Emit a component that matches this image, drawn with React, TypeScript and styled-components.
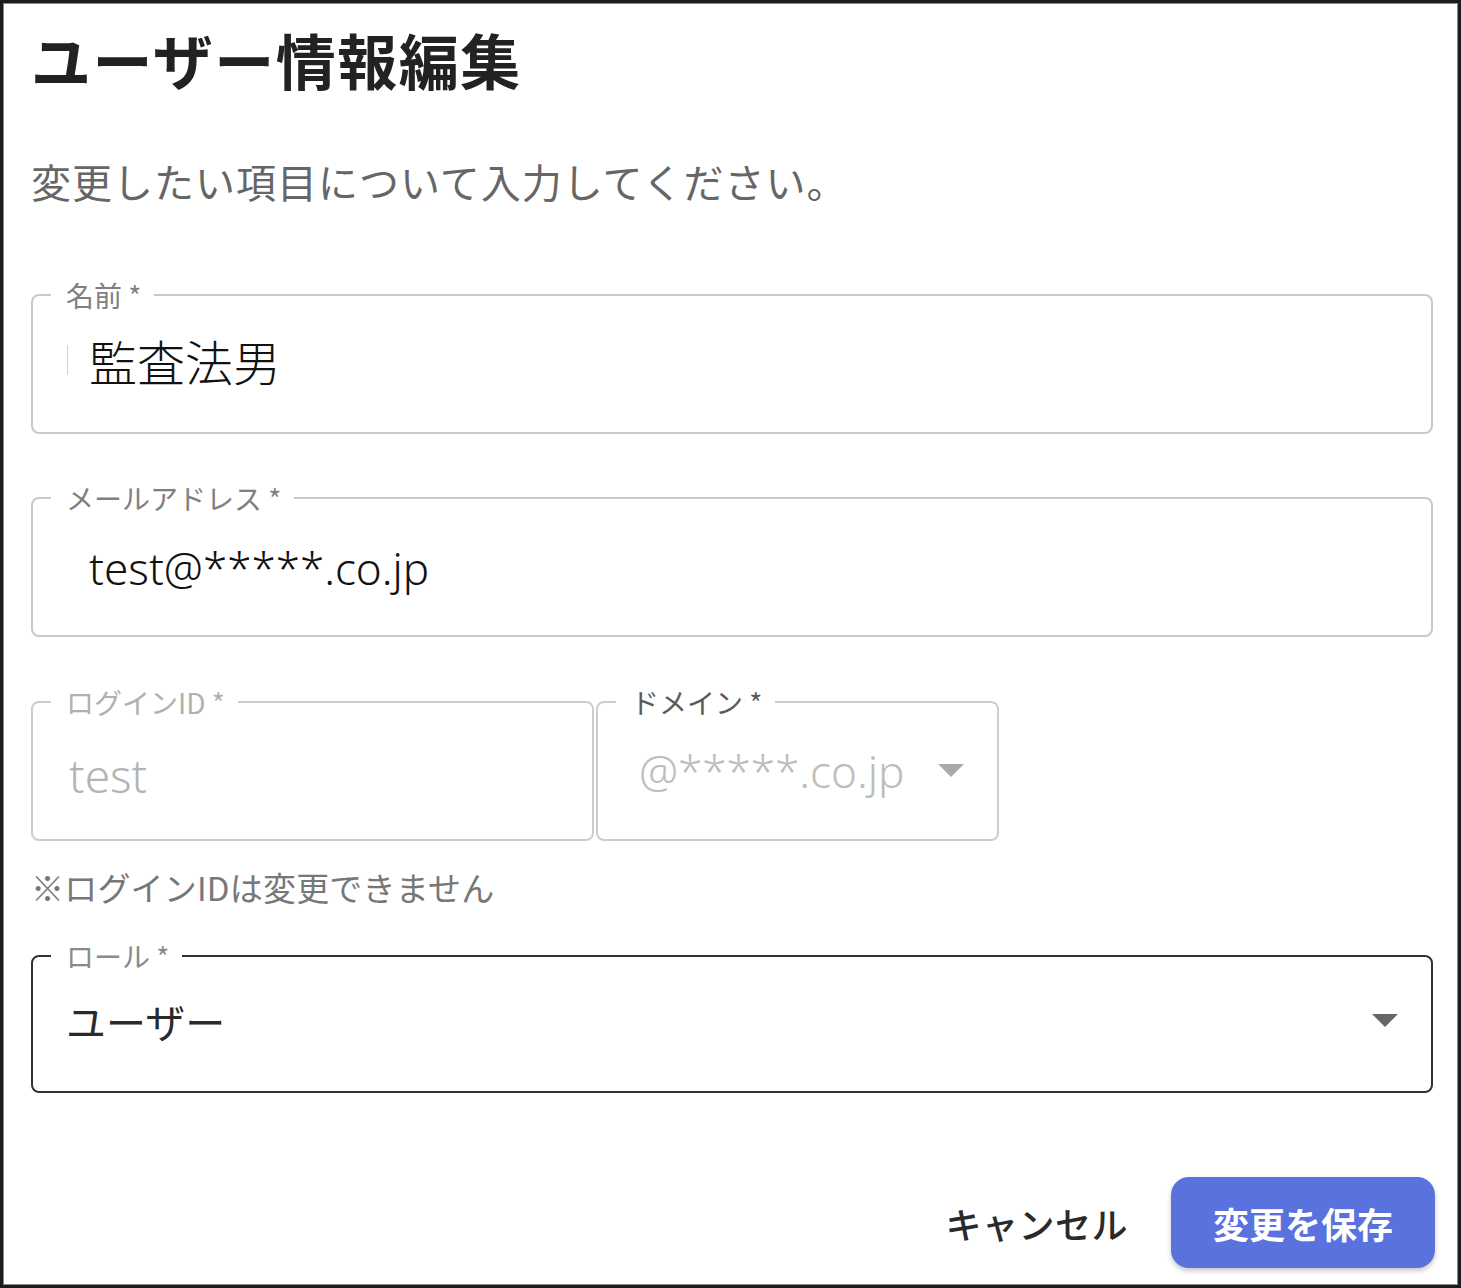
import React from "react";
import styled, { createGlobalStyle } from "styled-components";

const Global = createGlobalStyle`
  html, body { margin: 0; padding: 0; background: #fff; }
  body { font-family: "Noto Sans CJK JP", "Noto Sans", sans-serif; }
  * { box-sizing: border-box; }
`;

const Frame = styled.div`
  width: 1461px;
  height: 1288px;
  border: 3px solid #1c1c1c;
  box-shadow: inset 0 0 0 1px #8a8a8a;
  background: #fff;
  padding: 20px 25px 0 28px;
  display: flex;
  flex-direction: column;
`;

const Title = styled.h1`
  margin: 0;
  font-size: 60px;
  line-height: 72px;
  font-weight: 700;
  color: #222;
  letter-spacing: 1.5px;
`;

const Subtitle = styled.p`
  margin: 62px 0 0 0;
  font-size: 40px;
  line-height: 48px;
  color: #666;
  font-weight: 400;
  letter-spacing: 1px;
`;

const Field = styled.fieldset<{ $mt: number; $border: string; $w?: number }>`
  margin: ${(p) => p.$mt}px 0 0 0;
  padding: 0;
  border: 2px solid ${(p) => p.$border};
  border-radius: 8px;
  min-width: 0;
  ${(p) => (p.$w ? `width: ${p.$w}px; flex: none;` : "")}
`;

const Legend = styled.legend<{ $color: string }>`
  margin-left: 18px;
  padding: 0 13px 0 15px;
  font-size: 28px;
  line-height: 30px;
  color: ${(p) => p.$color};
  white-space: nowrap;
`;

const Content = styled.div<{ $pt: number; $pb: number; $pl: number; $pr?: number }>`
  display: flex;
  align-items: center;
  padding: ${(p) => `${p.$pt}px ${p.$pr ?? 20}px ${p.$pb}px ${p.$pl}px`};
`;

const Value = styled.span<{ $size: number; $color: string; $weight?: number; $latin?: boolean }>`
  font-family: ${(p) =>
    p.$latin ? `"Noto Sans", "Noto Sans CJK JP", sans-serif` : `"Noto Sans CJK JP", sans-serif`};
  font-size: ${(p) => p.$size}px;
  line-height: 56px;
  color: ${(p) => p.$color};
  font-weight: ${(p) => p.$weight ?? 300};
  white-space: nowrap;
`;

const Caret = styled.span`
  display: inline-block;
  width: 1px;
  height: 30px;
  background: #cfcfcf;
  margin-right: 21px;
`;

const Spacer = styled.div`
  flex: 1;
`;

const Arrow = styled.svg`
  flex: none;
  display: block;
`;

const Row = styled.div`
  display: flex;
  gap: 2px;
  margin-top: 50px;
`;

const Note = styled.p`
  margin: 26px 0 0 0;
  font-size: 33px;
  line-height: 40px;
  color: #777;
  letter-spacing: 0.2px;
`;

const Actions = styled.div`
  display: flex;
  justify-content: flex-end;
  align-items: center;
  gap: 23px;
  margin-top: 84px;
  margin-right: -2px;
`;

const TextButton = styled.button`
  border: none;
  background: transparent;
  font-family: inherit;
  font-size: 36px;
  font-weight: 500;
  color: #2a2a2a;
  padding: 0 20px;
  height: 91px;
  letter-spacing: 0.5px;
  cursor: pointer;
`;

const PrimaryButton = styled.button`
  border: none;
  width: 264px;
  height: 91px;
  border-radius: 18px;
  background: #5a72de;
  color: #fff;
  font-family: inherit;
  font-size: 36px;
  font-weight: 700;
  box-shadow: 0 3px 5px rgba(0, 0, 0, 0.22);
  cursor: pointer;
`;

const Triangle = ({ color }: { color: string }) => (
  <Arrow width="26" height="14" viewBox="0 0 26 14">
    <path d="M0 0 L26 0 L13 13 Z" fill={color} />
  </Arrow>
);

export default function App() {
  return (
    <>
      <Global />
      <Frame>
        <Title>ユーザー情報編集</Title>
        <Subtitle>変更したい項目について入力してください。</Subtitle>

        <Field $mt={75} $border="#c9c9c9">
          <Legend $color="#808080">名前 *</Legend>
          <Content $pt={22} $pb={44} $pl={34}>
            <Caret />
            <Value $size={48} $color="#111">監査法男</Value>
          </Content>
        </Field>

        <Field $mt={49} $border="#c9c9c9">
          <Legend $color="#808080">メールアドレス *</Legend>
          <Content $pt={27} $pb={39} $pl={56}>
            <Value $size={44} $color="#111" $latin>test@*****.co.jp</Value>
          </Content>
        </Field>

        <Row>
          <Field $mt={0} $border="#cdcdcd" $w={563}>
            <Legend $color="#b0b0b0">ログインID *</Legend>
            <Content $pt={30} $pb={36} $pl={36}>
              <Value $size={46} $color="#b3b3b3" $latin>test</Value>
            </Content>
          </Field>
          <Field $mt={0} $border="#cdcdcd" $w={403}>
            <Legend $color="#5a5a5a">ドメイン *</Legend>
            <Content $pt={26} $pb={40} $pl={41} $pr={33}>
              <Value $size={44} $color="#bdbdbd" $latin>@*****.co.jp</Value>
              <Spacer />
              <Triangle color="#aaaaaa" />
            </Content>
          </Field>
        </Row>

        <Note>※ログインIDは変更できません</Note>

        <Field $mt={34} $border="#333">
          <Legend $color="#8a8a8a">ロール *</Legend>
          <Content $pt={22} $pb={42} $pl={33} $pr={33}>
            <Value $size={40} $color="#2a2a2a" $weight={400}>ユーザー</Value>
            <Spacer />
            <Triangle color="#666" />
          </Content>
        </Field>

        <Actions>
          <TextButton>キャンセル</TextButton>
          <PrimaryButton>変更を保存</PrimaryButton>
        </Actions>
      </Frame>
    </>
  );
}
